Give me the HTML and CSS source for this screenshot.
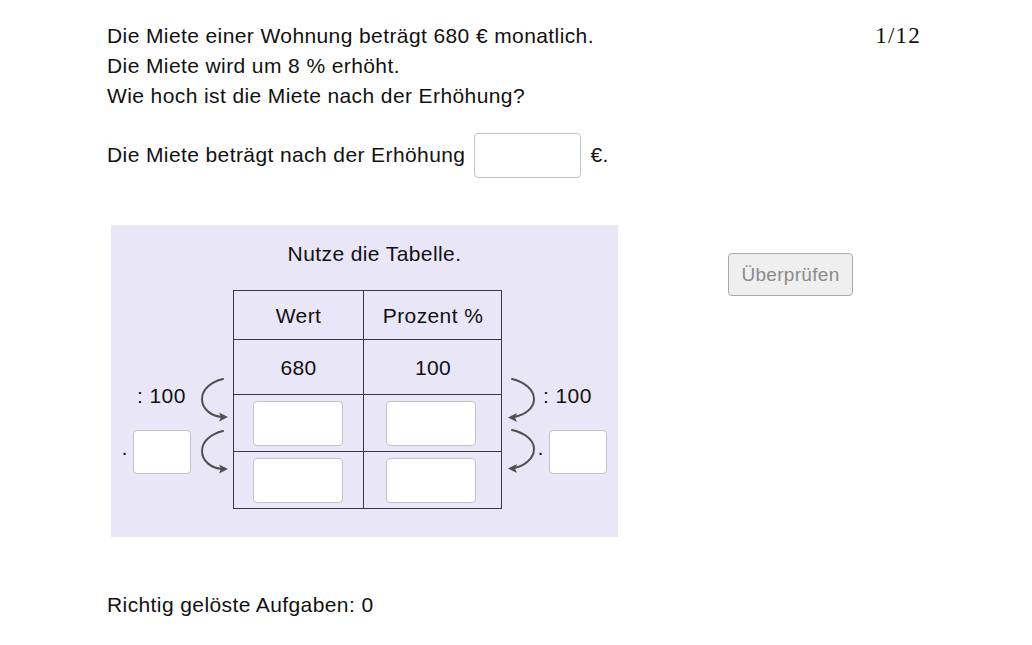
FILE: index.html
```html
<!DOCTYPE html>
<html lang="de">
<head>
<meta charset="utf-8">
<title>Prozentrechnung</title>
<link rel="stylesheet" href="styles.css">
</head>
<body>
<div class="page">
  <div class="head">
    <div class="question">
      <p class="line">Die Miete einer Wohnung beträgt 680 € monatlich.</p>
      <p class="line">Die Miete wird um 8 % erhöht.</p>
      <p class="line">Wie hoch ist die Miete nach der Erhöhung?</p>
    </div>
    <div class="counter">1/12</div>
  </div>

  <div class="answer">
    <span>Die Miete beträgt nach der Erhöhung</span>
    <span class="box answer-box"></span>
    <span>€.</span>
  </div>

  <div class="work">
    <div class="panel">
      <div class="panel-title">Nutze die Tabelle.</div>
      <div class="scheme">
        <div class="side side-left">
          <div class="side-label">: 100</div>
          <div class="side-input"><span class="dot">·</span><span class="box small-box"></span></div>
        </div>
        <svg class="arrows" width="30" height="100" viewBox="0 0 30 100">
          <g fill="none" stroke="#505050" stroke-width="2" stroke-linecap="round">
            <path d="M23 2 C 10 5, 2 13, 2 22 C 2 32, 11 39, 22 40"/>
            <path d="M23 54 C 10 57, 2 65, 2 74 C 2 84, 11 91, 22 92"/>
          </g>
          <g fill="#505050">
            <polygon points="28,40 19,35.5 21,40 19,44.5"/>
            <polygon points="28,92 19,87.5 21,92 19,96.5"/>
          </g>
        </svg>
        <div class="table">
          <div class="cell head-cell">Wert</div>
          <div class="cell head-cell">Prozent %</div>
          <div class="cell val-cell">680</div>
          <div class="cell val-cell">100</div>
          <div class="cell in-cell"><span class="box cell-box"></span></div>
          <div class="cell in-cell"><span class="box cell-box"></span></div>
          <div class="cell in-cell"><span class="box cell-box"></span></div>
          <div class="cell in-cell"><span class="box cell-box"></span></div>
        </div>
        <svg class="arrows" width="30" height="100" viewBox="0 0 30 100">
          <g fill="none" stroke="#505050" stroke-width="2" stroke-linecap="round">
            <path d="M5 2 C 18 5, 27 13, 27 22 C 27 32, 17 38, 7 40"/>
            <path d="M5 53 C 18 56, 27 63, 27 72 C 27 82, 17 89, 7 91"/>
          </g>
          <g fill="#505050">
            <polygon points="1,40.5 10,36 8,40.5 10,45"/>
            <polygon points="1,91.5 10,87 8,91.5 10,96"/>
          </g>
        </svg>
        <div class="side side-right">
          <div class="side-label">: 100</div>
          <div class="side-input"><span class="dot">·</span><span class="box small-box"></span></div>
        </div>
      </div>
    </div>
    <button class="check" type="button">Überprüfen</button>
  </div>

  <div class="score">Richtig gelöste Aufgaben: 0</div>
</div>
</body>
</html>
```

FILE: styles.css
```css
* { box-sizing: border-box; }
html, body { margin: 0; padding: 0; background: #fff; }
body {
  font-family: "Liberation Sans", Arial, sans-serif;
  font-size: 21px;
  letter-spacing: 0.4px;
  color: #111;
}
.page {
  padding: 21px 0 0 107px;
  width: 1032px;
}
.head {
  display: flex;
  justify-content: space-between;
  width: 814px;
}
.line {
  margin: 0;
  line-height: 30px;
}
.counter {
  font-family: "Liberation Serif", "Times New Roman", serif;
  font-size: 23px;
  letter-spacing: 1.2px;
  line-height: 30px;
}
.answer {
  display: flex;
  align-items: center;
  margin-top: 22px;
  height: 44px;
}
.box {
  display: inline-block;
  background: #fff;
  border: 1px solid #c4c4c8;
  border-radius: 4px;
}
.answer-box {
  width: 107px;
  height: 45px;
  margin: 0 9px 0 9px;
}
.work {
  display: flex;
  align-items: flex-start;
  margin-top: 48px;
}
.panel {
  margin-left: 4px;
  width: 507px;
  height: 312px;
  background: #e9e6f8;
  padding-top: 16px;
}
.panel-title {
  text-align: center;
  line-height: 26px;
  padding-left: 20px;
  margin-bottom: 23px;
}
.scheme {
  display: flex;
  align-items: flex-start;
}
.side {
  display: flex;
  flex-direction: column;
  padding-top: 91px;
}
.side-left { width: 89px; }
.side-right { width: 80px; }
.side-label { line-height: 30px; height: 30px; }
.side-left .side-label { padding-left: 26px; }
.side-right .side-label { padding-left: 6px; }
.side-input {
  display: flex;
  align-items: center;
  margin-top: 19px;
}
.side-left .side-input { padding-left: 10px; }
.dot { width: 11px; text-align: left; line-height: 44px; }
.side-left .dot { width: 12px; }
.side-right .dot { width: 12px; padding-left: 0; }
.small-box { width: 58px; height: 44px; }
.arrows {
  display: block;
  margin-top: 87px;
  flex: none;
}
.scheme > .arrows:first-of-type { margin-right: 3px; }
.scheme > .arrows:last-of-type { margin-left: 5px; }
.table {
  display: grid;
  grid-template-columns: 130px 138px;
  grid-template-rows: 49px 55px 57px 56px;
  border: 1px solid #3a3a3a;
  width: 269px;
  flex: none;
}
.cell {
  display: flex;
  align-items: center;
  justify-content: center;
  border-bottom: 1px solid #3a3a3a;
}
.cell:nth-child(odd) { border-right: 1px solid #3a3a3a; }
.cell:nth-last-child(-n+2) { border-bottom: none; }
.head-cell { padding-top: 2px; }
.val-cell { padding-top: 2px; }
.in-cell { padding-right: 2px; }
.in-cell:nth-child(even) { padding-right: 5px; }
.cell-box { width: 90px; height: 45px; }
.check {
  margin: 28px 0 0 110px;
  width: 125px;
  height: 43px;
  font-family: "Liberation Sans", Arial, sans-serif;
  font-size: 19px;
  letter-spacing: 0.3px;
  color: #8a8a8a;
  background: #efefef;
  border: 1px solid #a9a9a9;
  border-radius: 4px;
  padding: 0;
}
.score {
  margin-top: 53px;
  line-height: 30px;
}
```
